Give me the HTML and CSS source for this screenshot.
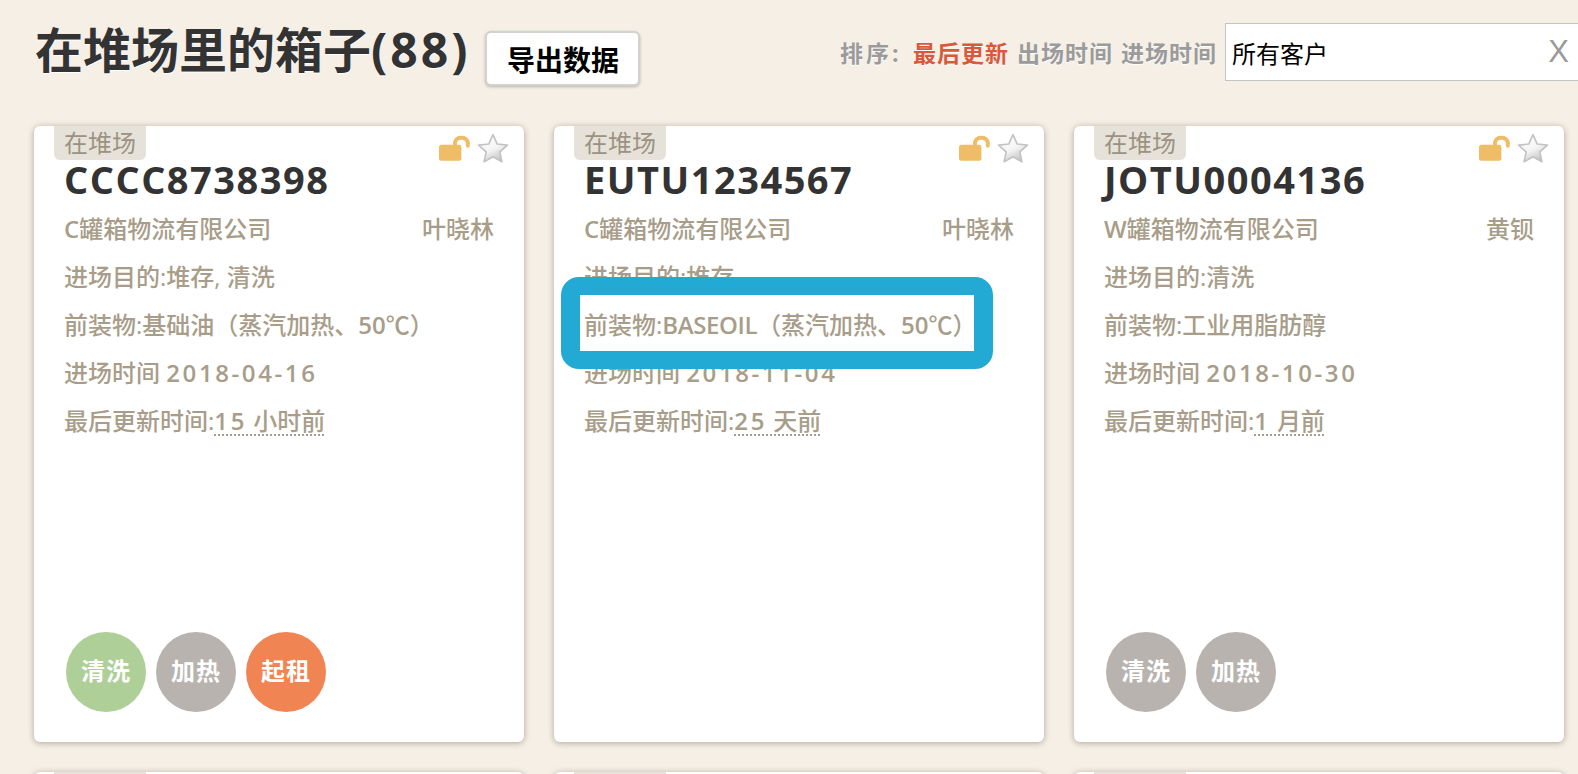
FILE: index.html
```html
<!DOCTYPE html>
<html lang="zh-CN">
<head>
  <meta charset="UTF-8">
  <title>在堆场里的箱子</title>
  <link rel="stylesheet" href="styles.css">
</head>
<body>

  <svg class="defs" width="0" height="0">
    <defs>
      <linearGradient id="star-fill" x1="0.2" y1="0" x2="0.7" y2="1">
        <stop offset="0" stop-color="#ffffff"/>
        <stop offset="0.55" stop-color="#f4f4f4"/>
        <stop offset="1" stop-color="#bdbdbd"/>
      </linearGradient>
      <symbol id="icon-lock" viewBox="0 0 30 26">
        <rect x="0" y="10" width="21" height="15" rx="2" fill="#efbd67"/>
        <path d="M15 11V7.500A6.200 5.500 0 0 1 27 7.500V11" fill="none" stroke="#efbd67" stroke-width="3.600" stroke-linecap="round"/>
      </symbol>
      <symbol id="icon-star" viewBox="0 0 30 28">
        <path d="M15 1.500L19 10.300L28.500 11.300L21.400 17.700L23.400 27L15 22.200L6.600 27L8.600 17.700L1.500 11.300L11 10.300Z" fill="url(#star-fill)" stroke="#c2c2c2" stroke-width="1.500" stroke-linejoin="round"/>
      </symbol>
    </defs>
  </svg>

  <header class="top-bar">
    <div class="title-group">
      <h1>在堆场里的箱子<span class="count">(88)</span></h1>
      <button class="export-btn">导出数据</button>
    </div>
    <div class="sort-group">
      <span class="sort-label">排序:</span>
      <a class="sort-link active">最后更新</a>
      <a class="sort-link">出场时间</a>
      <a class="sort-link">进场时间</a>
      <div class="customer-select">
        <span>所有客户</span>
        <span class="clear">X</span>
      </div>
    </div>
  </header>

  <main class="card-grid">

    <section class="card">
      <span class="tag">在堆场</span>
      <div class="card-icons">
        <svg class="lock"><use href="#icon-lock"/></svg>
        <svg class="star"><use href="#icon-star"/></svg>
      </div>
      <h2>CCCC8738398</h2>
      <div class="row split"><span><span class="latin">C</span>罐箱物流有限公司</span><span>叶晓林</span></div>
      <div class="row">进场目的:堆存, 清洗</div>
      <div class="row">前装物:基础油（蒸汽加热、<span class="latin">50</span>℃）</div>
      <div class="row">进场时间 <span class="num">2018-04-16</span></div>
      <div class="row">最后更新时间:<span class="ago"><span class="num">15</span> 小时前</span></div>
      <div class="actions">
        <span class="circle green">清洗</span>
        <span class="circle grey">加热</span>
        <span class="circle orange">起租</span>
      </div>
    </section>

    <section class="card">
      <span class="tag">在堆场</span>
      <div class="card-icons">
        <svg class="lock"><use href="#icon-lock"/></svg>
        <svg class="star"><use href="#icon-star"/></svg>
      </div>
      <h2>EUTU1234567</h2>
      <div class="row split"><span><span class="latin">C</span>罐箱物流有限公司</span><span>叶晓林</span></div>
      <div class="row">进场目的:堆存</div>
      <div class="row">前装物:<span class="latin tight">BASEOIL</span>（蒸汽加热、<span class="latin">50</span>℃）</div>
      <div class="row">进场时间 <span class="num">2018-11-04</span></div>
      <div class="row">最后更新时间:<span class="ago"><span class="num">25</span> 天前</span></div>
      <div class="highlight"></div>
    </section>

    <section class="card">
      <span class="tag">在堆场</span>
      <div class="card-icons">
        <svg class="lock"><use href="#icon-lock"/></svg>
        <svg class="star"><use href="#icon-star"/></svg>
      </div>
      <h2>JOTU0004136</h2>
      <div class="row split"><span><span class="latin">W</span>罐箱物流有限公司</span><span>黄钡</span></div>
      <div class="row">进场目的:清洗</div>
      <div class="row">前装物:工业用脂肪醇</div>
      <div class="row">进场时间 <span class="num">2018-10-30</span></div>
      <div class="row">最后更新时间:<span class="ago"><span class="num">1</span> 月前</span></div>
      <div class="actions">
        <span class="circle grey">清洗</span>
        <span class="circle grey">加热</span>
      </div>
    </section>

    <section class="card"><span class="tag"></span></section>
    <section class="card"><span class="tag"></span></section>
    <section class="card"><span class="tag"></span></section>

  </main>

</body>
</html>
```

FILE: styles.css
```css
:root {
  --bg-color: #f5efe6;
  --text-color: #333333;
  --muted: #a89d89;
  --blue: #22a9d4;
}
* {
  box-sizing: border-box;
  margin: 0;
  padding: 0;
}
html, body {
  height: 100%;
  overflow: hidden;
}
body {
  background-color: var(--bg-color);
  color: var(--text-color);
  font-family: "Open Sans", "Noto Sans CJK SC", sans-serif;
}
.defs {
  position: absolute;
}

/* top bar */
.top-bar {
  display: flex;
  justify-content: space-between;
  align-items: flex-start;
  height: 126px;
  padding: 21px 0 0 35px;
}
.title-group {
  display: flex;
  align-items: flex-start;
  gap: 15px;
}
h1 {
  font-size: 48px;
  font-weight: 700;
  line-height: 58px;
  text-shadow: 0 1px 1px #ffffff;
}
.count {
  letter-spacing: 3px;
}
.export-btn {
  margin-top: 10px;
  width: 155px;
  height: 55px;
  background: #ffffff;
  border: 2px solid #d4d2cf;
  border-radius: 6px;
  box-shadow: 0 1px 3px rgba(0, 0, 0, 0.25);
  color: #000000;
  font-family: inherit;
  font-size: 28px;
  font-weight: 700;
}
.sort-group {
  display: flex;
  align-items: center;
  height: 62px;
  font-size: 23px;
  font-weight: 700;
  letter-spacing: 1px;
  color: #9b9b9b;
  text-shadow: 0 1px 1px #ffffff;
}
.sort-label {
  width: 73px;
  letter-spacing: 3px;
}
.sort-link {
  margin-right: 8px;
}
.sort-link.active {
  color: #d9593c;
}
.customer-select {
  display: flex;
  justify-content: space-between;
  align-items: center;
  width: 353px;
  height: 58px;
  padding: 0 9px 0 6px;
  background: #ffffff;
  border: 1px solid #c4c4c4;
  border-right: none;
  color: #000000;
  font-size: 24px;
  font-weight: 400;
  letter-spacing: 0;
  text-shadow: none;
}
.customer-select .clear {
  color: #9a9a9a;
  font-family: "Liberation Sans", sans-serif;
  font-size: 31px;
}

/* cards */
.card-grid {
  display: grid;
  grid-template-columns: repeat(3, 490px);
  grid-auto-rows: 616px;
  gap: 30px;
  padding-left: 34px;
}
.card {
  position: relative;
  display: flex;
  flex-direction: column;
  padding: 0 30px 30px;
  background: #ffffff;
  border-radius: 6px;
  box-shadow: 0 1px 6px rgba(90, 75, 55, 0.45);
}
.tag {
  align-self: flex-start;
  margin-left: -10px;
  width: 92px;
  height: 34px;
  background: #e6e2da;
  border-radius: 0 0 6px 6px;
  color: #9c9281;
  font-size: 24px;
  line-height: 34px;
  text-align: center;
}
.card-icons {
  position: absolute;
  top: 7px;
  right: 15px;
  display: flex;
  align-items: flex-start;
  gap: 6px;
}
.lock {
  width: 32px;
  height: 28px;
  margin-top: 1px;
}
.star {
  width: 32px;
  height: 30px;
}
h2 {
  margin-top: -2px;
  font-size: 38px;
  font-weight: 700;
  letter-spacing: 1.5px;
  line-height: 42px;
  color: #333333;
}
.row {
  height: 48px;
  color: var(--muted);
  font-size: 24px;
  font-weight: 500;
  line-height: 48px;
}
.row.split {
  display: flex;
  justify-content: space-between;
  margin-top: 5px;
}
.latin, .num {
  font-weight: 600;
}
.tight {
  letter-spacing: -0.4px;
}
.num {
  letter-spacing: 2.6px;
}
.ago {
  text-decoration: underline dotted 2px;
  text-underline-offset: 4px;
}
.actions {
  display: flex;
  gap: 10px;
  margin-top: auto;
  margin-left: 2px;
}
.circle {
  width: 80px;
  height: 80px;
  border-radius: 50%;
  color: #ffffff;
  font-size: 24px;
  font-weight: 700;
  letter-spacing: 1px;
  line-height: 78px;
  text-align: center;
}
.circle.green { background: #aecf97; }
.circle.grey { background: #b9b3b0; }
.circle.orange { background: #f08453; }

/* annotation over the second card */
.highlight {
  position: absolute;
  top: 151px;
  left: 7px;
  width: 432px;
  height: 92px;
  border-style: solid;
  border-color: var(--blue);
  border-width: 18px 19px;
  border-radius: 18px;
}
```
